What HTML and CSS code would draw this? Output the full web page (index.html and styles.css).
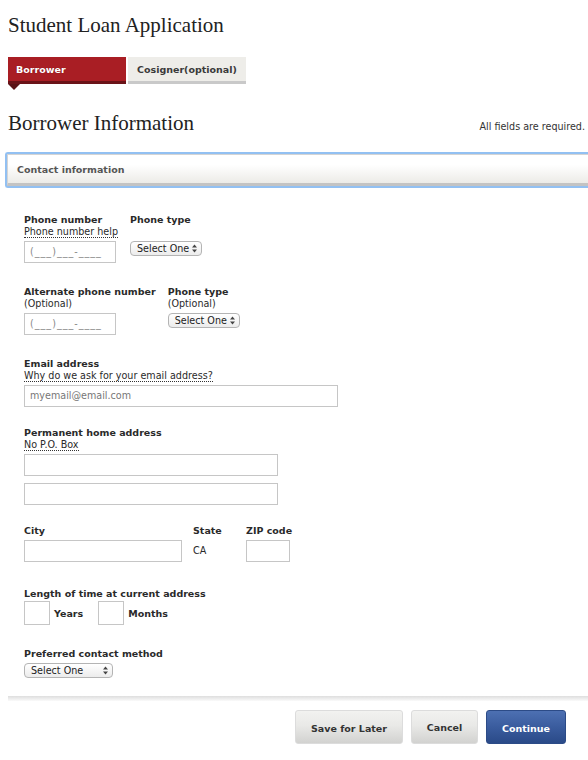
FILE: index.html
```html
<!DOCTYPE html>
<html>
<head>
<meta charset="utf-8">
<link rel="stylesheet" href="styles.css">
</head>
<body>
<div class="page">
  <h1 class="title">Student Loan Application</h1>
  <div class="tabs">
    <div class="tab tab-active">Borrower</div>
    <div class="tab tab-idle">Cosigner(optional)</div>
  </div>
  <div class="tab-pointer"></div>
  <div class="heading-row">
    <h2 class="heading">Borrower Information</h2>
    <span class="required">All fields are required.</span>
  </div>
  <div class="section-head"><div class="section-title">Contact information</div></div>

  <div class="fields">
    <div class="row row-1">
      <div class="field">
        <div class="label">Phone number</div>
        <div class="help"><span class="dotted">Phone number help</span></div>
        <div class="input phone">(___)___-____</div>
      </div>
      <div class="field">
        <div class="label">Phone type</div>
        <div class="select sel-phone sel-top">Select One<svg class="arrows" width="5" height="9" viewBox="0 0 5 9"><path d="M0 3.5 L2.5 0.5 L5 3.5 Z M0 5.5 L2.5 8.5 L5 5.5 Z" fill="#444"/></svg></div>
      </div>
    </div>

    <div class="row row-2">
      <div class="field">
        <div class="label">Alternate phone number</div>
        <div class="help">(Optional)</div>
        <div class="input phone">(___)___-____</div>
      </div>
      <div class="field">
        <div class="label">Phone type</div>
        <div class="help">(Optional)</div>
        <div class="select sel-phone">Select One<svg class="arrows" width="5" height="9" viewBox="0 0 5 9"><path d="M0 3.5 L2.5 0.5 L5 3.5 Z M0 5.5 L2.5 8.5 L5 5.5 Z" fill="#444"/></svg></div>
      </div>
    </div>

    <div class="group g-email">
      <div class="label">Email address</div>
      <div class="help"><span class="dotted">Why do we ask for your email address?</span></div>
      <div class="input email">myemail@email.com</div>
    </div>

    <div class="group g-address">
      <div class="label">Permanent home address</div>
      <div class="help"><span class="dotted">No P.O. Box</span></div>
      <div class="input address"></div>
      <div class="input address address-2"></div>
    </div>

    <div class="row row-city">
      <div class="field f-city">
        <div class="label">City</div>
        <div class="input city"></div>
      </div>
      <div class="field f-state">
        <div class="label">State</div>
        <div class="state-val">CA</div>
      </div>
      <div class="field">
        <div class="label">ZIP code</div>
        <div class="input zip"></div>
      </div>
    </div>

    <div class="group g-length">
      <div class="label">Length of time at current address</div>
      <div class="length-row">
        <div class="input small"></div><span class="unit">Years</span>
        <div class="input small small-2"></div><span class="unit">Months</span>
      </div>
    </div>

    <div class="group g-contact">
      <div class="label">Preferred contact method</div>
      <div class="select sel-contact">Select One<svg class="arrows" width="5" height="9" viewBox="0 0 5 9"><path d="M0 3.5 L2.5 0.5 L5 3.5 Z M0 5.5 L2.5 8.5 L5 5.5 Z" fill="#444"/></svg></div>
    </div>
  </div>

  <div class="separator"></div>
  <div class="actions">
    <button class="btn btn-gray btn-save">Save for Later</button>
    <button class="btn btn-gray btn-cancel">Cancel</button>
    <button class="btn btn-blue">Continue</button>
  </div>
</div>
</body>
</html>
```

FILE: styles.css
```css
html, body {
  margin: 0;
  padding: 0;
  background: #fff;
}
body {
  font-family: "DejaVu Sans", Verdana, sans-serif;
  font-size: 9.6px;
  color: #2a2a2a;
  overflow: hidden;
}
.page {
  padding: 12px 0 0 8px;
}
.title {
  font-family: "Liberation Serif", Georgia, serif;
  font-weight: normal;
  font-size: 21px;
  line-height: 26px;
  color: #222;
  margin: 0;
}
.tabs {
  display: flex;
  gap: 2px;
  margin-top: 19px;
}
.tab {
  width: 118px;
  height: 27px;
  box-sizing: border-box;
  font-weight: bold;
  font-size: 9.5px;
  line-height: 25px;
  padding-left: 8px;
  white-space: nowrap;
}
.tab-active {
  background: #a91e24;
  color: #fff;
  border-bottom: 3px solid #6a1318;
  text-shadow: 0 0 1px rgba(80, 0, 0, 0.6);
}
.tab-idle {
  background: #eeede9;
  color: #3a3a3a;
  border-bottom: 3px solid #c9c9c9;
  padding-left: 9px;
}
.tab-pointer {
  width: 0;
  height: 0;
  border-left: 6px solid transparent;
  border-right: 6px solid transparent;
  border-top: 6px solid #5a1216;
}
.heading-row {
  display: flex;
  justify-content: space-between;
  align-items: baseline;
  margin-top: 20px;
  padding-right: 3px;
}
.heading {
  font-family: "Liberation Serif", Georgia, serif;
  font-weight: normal;
  font-size: 21px;
  line-height: 26px;
  color: #222;
  margin: 0;
}
.required {
  font-size: 9.6px;
  color: #333;
}
.section-head {
  margin-top: 16px;
  margin-left: -3px;
  border: 2px solid #92c0f2;
  border-right: none;
  border-radius: 3px 0 0 3px;
}
.section-title {
  border: 1px solid #d4d4d4;
  border-right: none;
  border-bottom: 3px solid #c3c3c3;
  height: 28px;
  line-height: 30px;
  padding-left: 9px;
  font-weight: bold;
  font-size: 9.5px;
  color: #555;
  background: linear-gradient(#ffffff 0%, #ffffff 35%, #ecebe7 100%);
}
.fields {
  padding-left: 16px;
}
.label {
  font-weight: bold;
  line-height: 12px;
  font-size: 9.5px;
  white-space: nowrap;
}
.help {
  line-height: 12px;
  font-size: 9.6px;
  white-space: nowrap;
}
.dotted {
  border-bottom: 1px dotted #333;
}
.row {
  display: flex;
  gap: 12px;
  align-items: flex-start;
}
.row-1 { margin-top: 26px; }
.row-2 { margin-top: 23px; }
.g-email { margin-top: 23px; }
.g-address { margin-top: 20px; }
.row-city { margin-top: 20px; gap: 0; }
.g-length { margin-top: 26px; }
.g-contact { margin-top: 23px; }

.input {
  box-sizing: border-box;
  height: 22px;
  border: 1px solid #c6c6c6;
  background: #fff;
  margin-top: 3px;
  font-size: 9.6px;
  line-height: 20px;
  padding-left: 5px;
  color: #888;
  white-space: nowrap;
}
.phone { width: 92px; letter-spacing: 1px; }
.email { width: 314px; color: #777; padding-left: 5px; }
.address { width: 254px; }
.address-2 { margin-top: 7px; }
.select {
  display: flex;
  align-items: center;
  justify-content: space-between;
  box-sizing: border-box;
  height: 15px;
  border: 1px solid #b4b4b4;
  border-radius: 4px;
  background: linear-gradient(#ffffff, #ececec);
  font-size: 9.6px;
  line-height: 13px;
  color: #222;
  padding: 0 4px 0 6px;
  margin-top: 3px;
  white-space: nowrap;
}
.sel-phone { width: 72px; }
.sel-top { margin-top: 15px; }
.sel-contact { width: 89px; margin-top: 3px; }
.arrows { flex: none; }

.f-city { width: 169px; }
.f-state { width: 53px; }
.city { width: 158px; }
.zip { width: 44px; }
.state-val {
  margin-top: 3px;
  line-height: 22px;
  font-size: 9.6px;
}
.length-row {
  display: flex;
  align-items: center;
  margin-top: 1px;
}
.small {
  width: 26px;
  height: 24px;
  margin-top: 0;
}
.unit {
  font-weight: bold;
  font-size: 9.5px;
  margin-left: 4px;
}
.small-2 { margin-left: 15px; }

.separator {
  margin-top: 18px;
  height: 5px;
  background: linear-gradient(#dedede, #fafafa);
}
.actions {
  display: flex;
  justify-content: flex-end;
  gap: 8px;
  margin-top: 9px;
  padding-right: 22px;
}
.btn {
  height: 34px;
  border-radius: 3px;
  font-family: "DejaVu Sans", Verdana, sans-serif;
  font-weight: bold;
  font-size: 9.5px;
  padding: 0;
  border: none;
}
.btn-gray {
  background: linear-gradient(#f2f2f0 0%, #e9e9e7 45%, #d2d2d0 100%);
  color: #333;
  border: 1px solid #dcdcdc;
}
.btn-save { width: 108px; padding-top: 2px; }
.btn-cancel { width: 67px; }
.btn-blue {
  width: 80px;
  background: linear-gradient(#4d70b2 0%, #3a5c9e 50%, #2a4a88 100%);
  color: #fff;
  border: 1px solid #2c4b87;
  padding-top: 2px;
}
```
